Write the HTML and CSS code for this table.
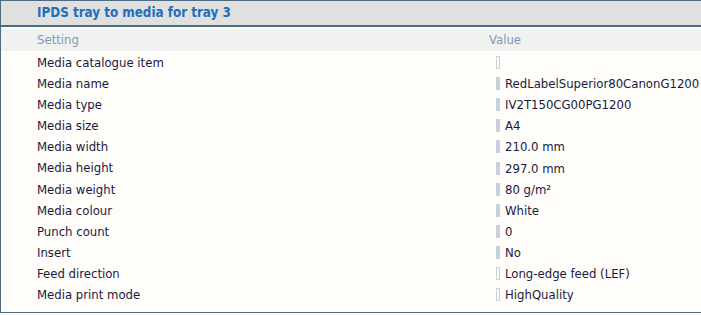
FILE: index.html
```html
<!DOCTYPE html>
<html>
<head>
<meta charset="utf-8">
<link rel="stylesheet" href="styles.css">
</head>
<body>
<div class="panel">
  <div class="title">IPDS tray to media for tray 3</div>
  <div class="head">
    <div class="c1">Setting</div>
    <div class="c2">Value</div>
  </div>
  <div class="rows">
    <div class="row"><div class="c1">Media catalogue item</div><div class="v"><span class="m hollow"></span></div></div>
    <div class="row"><div class="c1">Media name</div><div class="v"><span class="m"></span>RedLabelSuperior80CanonG1200</div></div>
    <div class="row"><div class="c1">Media type</div><div class="v"><span class="m"></span>IV2T150CG00PG1200</div></div>
    <div class="row"><div class="c1">Media size</div><div class="v"><span class="m"></span>A4</div></div>
    <div class="row"><div class="c1">Media width</div><div class="v"><span class="m"></span>210.0 mm</div></div>
    <div class="row"><div class="c1">Media height</div><div class="v"><span class="m"></span>297.0 mm</div></div>
    <div class="row"><div class="c1">Media weight</div><div class="v"><span class="m"></span>80 g/m²</div></div>
    <div class="row"><div class="c1">Media colour</div><div class="v"><span class="m"></span>White</div></div>
    <div class="row"><div class="c1">Punch count</div><div class="v"><span class="m"></span>0</div></div>
    <div class="row"><div class="c1">Insert</div><div class="v"><span class="m"></span>No</div></div>
    <div class="row"><div class="c1">Feed direction</div><div class="v"><span class="m hollow"></span>Long-edge feed (LEF)</div></div>
    <div class="row"><div class="c1">Media print mode</div><div class="v"><span class="m hollow"></span>HighQuality</div></div>
  </div>
</div>
</body>
</html>
```
FILE: styles.css
```css
html, body {
  margin: 0;
  padding: 0;
  background: #fffdfa;
}
body {
  width: 701px;
  height: 315px;
  overflow: hidden;
  font-family: "DejaVu Sans Condensed", "DejaVu Sans", sans-serif;
  font-size: 13px;
  color: #1a1a40;
}
.panel {
  border-top: 1px solid #4f6a85;
  border-left: 1px solid #4f6a85;
  border-bottom: 1px solid #4f6a85;
  height: 313px;
  box-sizing: border-box;
  background: #fffdfa;
}
.title {
  height: 24px;
  background: #e0e0de;
  border-bottom: 2px solid #4f6a85;
  padding-left: 36px;
  font-weight: bold;
  font-size: 13.3px;
  color: #1e6ec2;
  line-height: 24px;
}
.head {
  margin-top: 2px;
  height: 22px;
  background: #f0f2ef;
  display: grid;
  grid-template-columns: 488px 1fr;
  line-height: 22px;
  color: #7f9ab8;
}
.c1 {
  padding-left: 36px;
}
.rows {
  padding-top: 1px;
}
.row {
  display: grid;
  grid-template-columns: 488px 1fr;
  height: 21.1px;
  line-height: 21px;
}
.v {
  display: flex;
  align-items: center;
  padding-left: 7px;
}
.m {
  display: inline-block;
  width: 4px;
  height: 13px;
  background: #c8d0da;
  margin-right: 5px;
  box-sizing: border-box;
}
.m.hollow {
  background: transparent;
  border: 1px solid #c8d0da;
}
```
